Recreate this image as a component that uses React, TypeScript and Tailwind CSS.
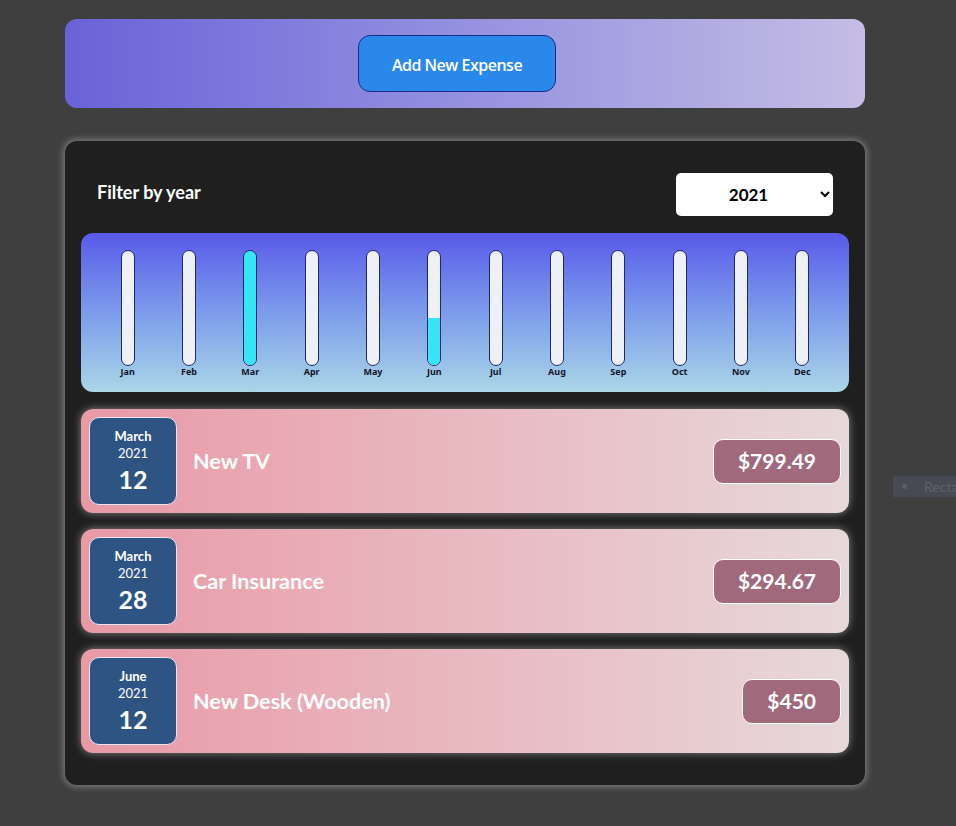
import React from 'react';

type Expense = { id: string; title: string; amount: number; date: Date };

const expenses: Expense[] = [
  { id: 'e1', title: 'New TV', amount: 799.49, date: new Date(2021, 2, 12) },
  { id: 'e2', title: 'Car Insurance', amount: 294.67, date: new Date(2021, 2, 28) },
  { id: 'e3', title: 'New Desk (Wooden)', amount: 450, date: new Date(2021, 5, 12) },
];

const months = ['Jan', 'Feb', 'Mar', 'Apr', 'May', 'Jun', 'Jul', 'Aug', 'Sep', 'Oct', 'Nov', 'Dec'];

const ChartBar: React.FC<{ label: string; fill: number }> = ({ label, fill }) => (
  <div className="flex flex-col items-center">
    <div className="w-[14px] h-[116px] rounded-full border border-[#25256e] bg-[#edf1f5] overflow-hidden flex flex-col justify-end">
      <div className="bg-[#36e6f5] w-full" style={{ height: `${fill}%` }} />
    </div>
    <span className="text-[9px] font-bold text-[#141428] leading-[12px] font-['Noto_Sans',sans-serif]">
      {label}
    </span>
  </div>
);

const Chart: React.FC<{ items: Expense[] }> = ({ items }) => {
  const totals = months.map((_, m) =>
    items.filter((e) => e.date.getMonth() === m).reduce((s, e) => s + e.amount, 0)
  );
  const max = Math.max(...totals);
  return (
    <div className="h-[159px] rounded-xl bg-gradient-to-b from-[#5a58e8] to-[#aad6e6] px-4 pt-[17px] grid grid-cols-12">
      {months.map((m, i) => (
        <ChartBar key={m} label={m} fill={max ? (totals[i] / max) * 100 : 0} />
      ))}
    </div>
  );
};

const ExpenseItem: React.FC<{ item: Expense }> = ({ item }) => {
  const month = item.date.toLocaleString('en-US', { month: 'long' });
  return (
    <div className="h-[104px] rounded-xl bg-gradient-to-r from-[#e899a6] to-[#e6d8da] shadow-[0_0_8px_rgba(255,255,255,0.45)] flex items-center pl-2 pr-[8px]">
      <div className="w-[88px] h-[88px] rounded-[10px] bg-[#2e5483] border border-[#e6e6ee] flex flex-col items-center text-white pt-[9px]">
        <span className="text-[13px] font-bold leading-[18px]">{month}</span>
        <span className="text-[13px] leading-[17px]">{item.date.getFullYear()}</span>
        <span className="text-[25px] font-bold leading-[34px]">{item.date.getDate()}</span>
      </div>
      <h2 className="ml-4 flex-1 text-[21.6px] font-bold text-white">{item.title}</h2>
      <div className="h-[45px] px-[24px] rounded-[10px] bg-[#a06a7c] border border-white flex items-center text-[21px] font-bold text-white">
        ${item.amount}
      </div>
    </div>
  );
};

export default function App() {
  return (
    <div className="relative min-h-screen bg-[#3f3f3f] pt-[19px] overflow-hidden font-['Lato',sans-serif]">
      <div className="ml-[65px] w-[800px]">
        <div className="h-[89px] rounded-xl bg-gradient-to-r from-[#6a62d8] to-[#c5bde4] flex items-center justify-center pr-4">
          <button className="w-[198px] h-[57px] rounded-xl bg-[#2a88ea] border border-[#1c2a8c] text-white text-[16px] font-semibold font-['Open_Sans',sans-serif] tracking-[-0.5px] pt-[2px]">
            Add New Expense
          </button>
        </div>

        <div className="mt-[33px] rounded-xl bg-[#1f1f1f] shadow-[0_0_6px_2px_rgba(255,255,255,0.3)] px-4 pt-4 pb-8">
          <div className="flex items-center justify-between px-4 pt-4 pb-[17px]">
            <span className="text-[18px] font-bold text-white pb-[5px]">Filter by year</span>
            <select
              defaultValue="2021"
              className="w-[157px] h-[43px] rounded-[5px] bg-white text-[17px] font-bold text-black [text-align-last:center] px-2"
            >
              <option value="2022">2022</option>
              <option value="2021">2021</option>
              <option value="2020">2020</option>
              <option value="2019">2019</option>
            </select>
          </div>

          <Chart items={expenses} />

          <ul className="mt-[17px] flex flex-col gap-4">
            {expenses.map((e) => (
              <li key={e.id}>
                <ExpenseItem item={e} />
              </li>
            ))}
          </ul>
        </div>
      </div>

      {/* stray overlay tag on the right edge */}
      <div className="absolute left-[893px] top-[476px] w-[63px] h-[21px] bg-[#474a54] flex items-center pl-[9px] gap-[17px] text-[14px] text-[#5e6168] overflow-hidden whitespace-nowrap">
        <span className="shrink-0 w-[5px] h-[5px] rounded-full bg-[#5a5d66]" />
        <span>Recta</span>
      </div>
    </div>
  );
}
